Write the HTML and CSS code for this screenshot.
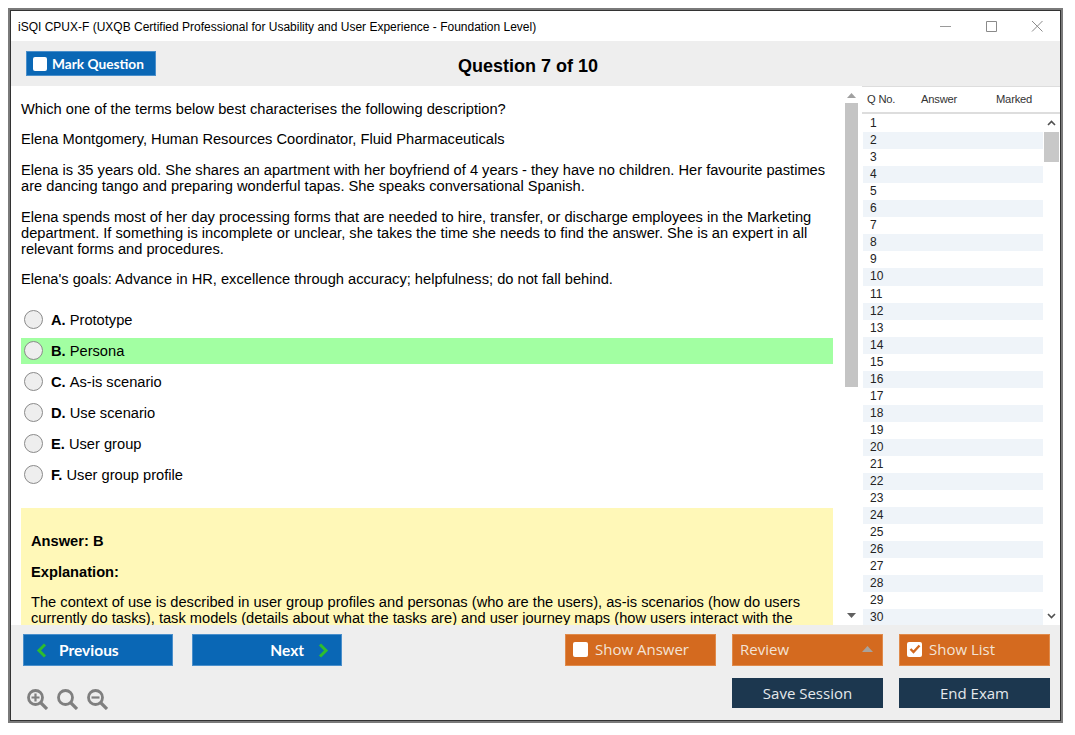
FILE: index.html
```html
<!DOCTYPE html>
<html lang="en">
<head>
<meta charset="utf-8">
<title>iSQI CPUX-F</title>
<link rel="stylesheet" href="styles.css">
</head>
<body>
<div class="window">
  <header class="titlebar">
    <span class="title">iSQI CPUX-F (UXQB Certified Professional for Usability and User Experience - Foundation Level)</span>
    <div class="winctl">
      <svg width="16" height="16" viewBox="0 0 16 16"><path d="M3 8.500h11" stroke="#9a9a9a" fill="none"/></svg>
      <svg width="16" height="16" viewBox="0 0 16 16"><path d="M3.500 3.500h10v10h-10z" stroke="#8a8a8a" fill="none"/></svg>
      <svg width="16" height="16" viewBox="0 0 16 16"><path d="M3 3l10.500 10.500M13.500 3L3 13.500" stroke="#8a8a8a" fill="none"/></svg>
    </div>
  </header>
  <div class="toolbar">
    <div class="btn blue mark"><span class="box"></span>Mark Question</div>
    <h1 class="qtitle">Question 7 of 10</h1>
  </div>
  <main class="main">
    <section class="question">
      <div class="qtext">
        <p>Which one of the terms below best characterises the following description?</p>
        <p>Elena Montgomery, Human Resources Coordinator, Fluid Pharmaceuticals</p>
        <p>Elena is 35 years old. She shares an apartment with her boyfriend of 4 years - they have no children. Her favourite pastimes are dancing tango and preparing wonderful tapas. She speaks conversational Spanish.</p>
        <p>Elena spends most of her day processing forms that are needed to hire, transfer, or discharge employees in the Marketing department. If something is incomplete or unclear, she takes the time she needs to find the answer. She is an expert in all relevant forms and procedures.</p>
        <p>Elena's goals: Advance in HR, excellence through accuracy; helpfulness; do not fall behind.</p>
      </div>
      <ul class="options">
        <li class="option"><span class="radio"></span><b>A.</b>&nbsp;Prototype</li>
        <li class="option correct"><span class="radio"></span><b>B.</b>&nbsp;Persona</li>
        <li class="option"><span class="radio"></span><b>C.</b>&nbsp;As-is scenario</li>
        <li class="option"><span class="radio"></span><b>D.</b>&nbsp;Use scenario</li>
        <li class="option"><span class="radio"></span><b>E.</b>&nbsp;User group</li>
        <li class="option"><span class="radio"></span><b>F.</b>&nbsp;User group profile</li>
      </ul>
      <div class="answer">
        <p><b>Answer: B</b></p>
        <p class="expl"><b>Explanation:</b></p>
        <p>The context of use is described in user group profiles and personas (who are the users), as-is scenarios (how do users currently do tasks), task models (details about what the tasks are) and user journey maps (how users interact with the</p>
      </div>
    </section>
    <div class="vscroll">
      <svg class="arrow" width="9" height="5" viewBox="0 0 9 5"><path d="M0 5L4.500 0L9 5z" fill="#a0a0a0"/></svg>
      <div class="track"><div class="thumb"></div></div>
      <svg class="arrow" width="9" height="5" viewBox="0 0 9 5"><path d="M0 0L4.500 5L9 0z" fill="#606060"/></svg>
    </div>
    <aside class="list">
      <div class="listhead"><span class="c1">Q No.</span><span class="c2">Answer</span><span class="c3">Marked</span></div>
      <div class="listbody">
        <div class="rows" id="rows"></div>
        <div class="listscroll">
          <svg width="9" height="6" viewBox="0 0 9 6"><path d="M1 5l3.500-3.500L8 5" stroke="#505050" stroke-width="1.600" fill="none"/></svg>
          <div class="ltrack"><div class="lthumb"></div></div>
          <svg width="9" height="6" viewBox="0 0 9 6"><path d="M1 1l3.500 3.500L8 1" stroke="#505050" stroke-width="1.600" fill="none"/></svg>
        </div>
      </div>
    </aside>
  </main>
  <footer class="footer">
    <div class="fleft">
      <div class="navrow">
        <div class="btn blue nav prev">
          <svg width="11" height="15" viewBox="0 0 11 15"><path d="M9 1.500L3 7.500l6 6" stroke="#2ebd2e" stroke-width="3" fill="none"/></svg>
          <span>Previous</span>
        </div>
        <div class="btn blue nav next">
          <span>Next</span>
          <svg width="11" height="15" viewBox="0 0 11 15"><path d="M2 1.500l6 6-6 6" stroke="#2ebd2e" stroke-width="3" fill="none"/></svg>
        </div>
      </div>
      <div class="zoomrow">
        <svg width="21" height="21" viewBox="0 0 21 21"><g stroke="#7f7f7f" fill="none"><circle cx="8.500" cy="8.500" r="7" stroke-width="2.800"/><path d="M13.500 13.500L20 20" stroke-width="3.200"/><path d="M4.500 8.500h8M8.500 4.500v8" stroke-width="2.200"/></g></svg>
        <svg width="21" height="21" viewBox="0 0 21 21"><g stroke="#7f7f7f" fill="none"><circle cx="8.500" cy="8.500" r="7" stroke-width="2.800"/><path d="M13.500 13.500L20 20" stroke-width="3.200"/></g></svg>
        <svg width="21" height="21" viewBox="0 0 21 21"><g stroke="#7f7f7f" fill="none"><circle cx="8.500" cy="8.500" r="7" stroke-width="2.800"/><path d="M13.500 13.500L20 20" stroke-width="3.200"/><path d="M4.500 8.500h8" stroke-width="2.200"/></g></svg>
      </div>
    </div>
    <div class="fright">
      <div class="btn orange"><span class="box"></span>Show Answer</div>
      <div class="btn orange review"><span>Review</span><svg width="11" height="6" viewBox="0 0 11 6"><path d="M0 6L5.500 0L11 6z" fill="#a8a29c"/></svg></div>
      <div class="btn orange"><span class="box checked"><svg width="12" height="10" viewBox="0 0 12 10"><path d="M1.500 5l3 3L10.500 1.500" stroke="#d2691f" stroke-width="2.400" fill="none"/></svg></span>Show List</div>
      <div class="spacer"></div>
      <div class="btn navy">Save Session</div>
      <div class="btn navy">End Exam</div>
    </div>
  </footer>
</div>
<script src="rows.js"></script>
</body>
</html>
```
FILE: rows.js
```js
var rows = document.getElementById('rows');
for (var i = 1; i <= 30; i++) {
  var r = document.createElement('div');
  r.className = 'row';
  r.textContent = i;
  rows.appendChild(r);
}
```
FILE: styles.css
```css
* { box-sizing: border-box; }
html, body { margin: 0; padding: 0; background: #fff; }
body { height: 735px; overflow: hidden; font-family: "Liberation Sans", Arial, sans-serif; color: #000; }
.window {
  margin: 8px 0 0 8px;
  width: 1055px;
  height: 715px;
  border: 2px solid #7a7a7a;
  outline: 1px solid #333;
  outline-offset: -3px;
  padding: 1px;
  display: flex;
  flex-direction: column;
  background: #eee;
}
.titlebar { height: 30px; flex: none; background: #fff; display: flex; align-items: center; justify-content: space-between; padding: 2px 15px 0 7px; }
.title { font-size: 12px; }
.winctl { display: flex; gap: 30px; margin-top: -3px; }
.winctl svg { display: block; }
.toolbar { height: 45px; flex: none; background: #eee; position: relative; padding: 10px 0 0 15px; }
.btn { display: flex; align-items: center; color: #fff; font-family: "Open Sans", sans-serif; }
.blue { background: #0a67b5; font-family: Lato, sans-serif; font-weight: 700; border: 1px solid #4a8fcb; }
.orange { background: #d46a1f; color: #f3e3d6; font-size: 15px; border: 1px solid #e08a4a; padding: 0 0 2px 7px; }
.navy { background: #1c374f; color: #e4e8ec; font-size: 15px; justify-content: center; padding-bottom: 1px; }
.mark { width: 130px; height: 25px; font-size: 13.700px; padding-left: 6px; }
.box { width: 14px; height: 14px; background: #fff; border-radius: 2px; margin-right: 5px; display: flex; align-items: center; justify-content: center; flex: none; }
.orange .box { width: 15px; height: 15px; margin-right: 7px; }
.qtitle { margin: 0; position: absolute; left: 0; right: 15px; top: 14px; text-align: center; font-size: 18px; line-height: 22px; font-weight: 700; pointer-events: none; }
.main { flex: 1; min-height: 0; display: flex; background: #fff; }
.question { width: 832px; flex: none; overflow: hidden; padding: 14.800px 0 0 10px; font-size: 14.670px; line-height: 16px; }
.qtext { width: 812px; }
.qtext p { margin: 0 0 14.600px; }
.options { list-style: none; margin: 19.500px 0 0; padding: 0; width: 812px; }
.option { height: 26px; margin-bottom: 5px; display: flex; align-items: center; padding-left: 3px; white-space: pre; }
.correct { background: #a2ffa2; }
.radio { width: 19px; height: 19px; border-radius: 50%; background: #eee; border: 1px solid #8a8a8a; margin-right: 8px; flex: none; }
.answer { width: 812px; margin-top: 20px; background: #fff8b8; padding: 25px 10px 0; }
.answer p { margin: 0 0 15px; }
.answer .expl { margin-bottom: 14px; }
.vscroll { width: 17px; flex: none; background: #fff; display: flex; flex-direction: column; align-items: center; padding: 7px 0 7px; }
.vscroll .arrow { flex: none; display: block; }
.track { flex: 1; width: 100%; padding: 5px 0 5px 2px; }
.thumb { width: 13px; height: 284px; background: #c4c4c4; }
.list { flex: 1; min-width: 0; background: #fff; display: flex; flex-direction: column; margin-left: 2px; }
.listhead { height: 28px; flex: none; border-top: 1px solid #ddd; border-bottom: 2px solid #ddd; display: flex; align-items: center; padding-bottom: 2px; font-size: 11.200px; color: #333; letter-spacing: -.2px; }
.c1 { margin-left: 5px; width: 54px; }
.c2 { width: 75px; }
.listbody { flex: 1; min-height: 0; display: flex; padding: 0 1px 0 1px; }
.rows { width: 180px; flex: none; overflow: hidden; padding-top: 1.050px; }
.row { height: 17.050px; line-height: 17px; font-size: 12px; padding-left: 7px; color: #222; }
.row:nth-child(even) { background: #eff4f9; }
.listscroll { flex: 1; display: flex; flex-direction: column; align-items: center; padding: 6px 0 6px 1px; }
.listscroll svg { flex: none; display: block; }
.ltrack { flex: 1; width: 100%; padding-top: 6px; }
.lthumb { height: 30px; background: #c8c8c8; }
.footer { height: 95px; flex: none; background: #eee; display: flex; justify-content: space-between; padding: 9px 10px 0 12px; }
.navrow { display: flex; gap: 19px; }
.nav { width: 150px; height: 32px; font-size: 15.500px; }
.prev { padding-left: 12px; gap: 12px; }
.next { justify-content: flex-end; padding-right: 12px; gap: 14px; }
.zoomrow { display: flex; gap: 9px; margin: 23px 0 0 4px; }
.zoomrow svg { display: block; }
.fright { display: grid; grid-template-columns: repeat(3, 151px); grid-template-rows: 32px 30px; gap: 12px 16px; }
.review { justify-content: space-between; padding-right: 9px; }
```
